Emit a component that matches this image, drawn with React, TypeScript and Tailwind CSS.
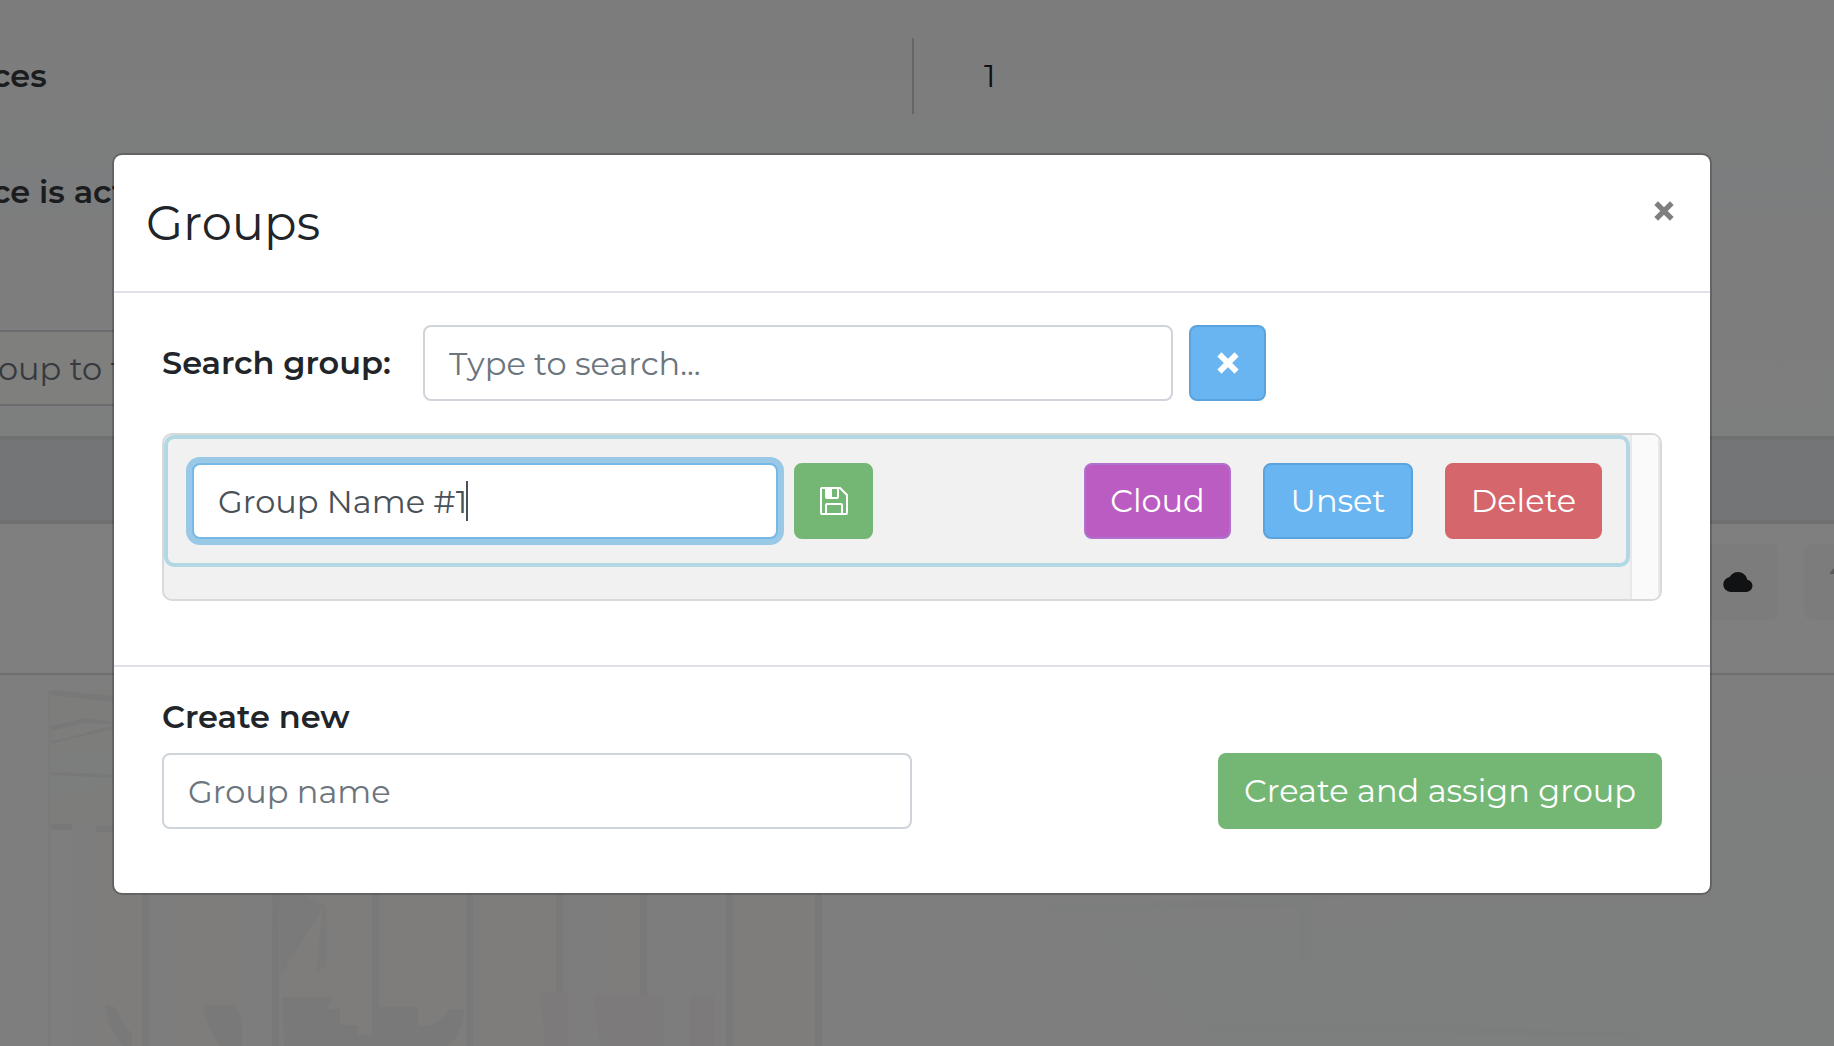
import { useState } from 'react'
import type { ButtonHTMLAttributes, InputHTMLAttributes } from 'react'
import clsx from 'clsx'

const BUTTON_COLORS = {
  green: 'bg-[#74b674] border-[#74b674]',
  purple: 'bg-[#ba5cc2] border-[#b070cc]',
  blue: 'bg-[#69b5f1] border-[#5ba3dc]',
  red: 'bg-[#d5666b] border-[#d5666b]',
}

type ButtonProps = ButtonHTMLAttributes<HTMLButtonElement> & {
  color: keyof typeof BUTTON_COLORS
}

function Button({ color, className, ...props }: ButtonProps) {
  return (
    <button
      type="button"
      className={clsx(
        'flex h-[76px] shrink-0 items-center justify-center rounded-lg border-2 text-white',
        BUTTON_COLORS[color],
        className,
      )}
      {...props}
    />
  )
}

function TextInput({ className, ...props }: InputHTMLAttributes<HTMLInputElement>) {
  return (
    <input
      type="text"
      className={clsx(
        'block h-[76px] rounded-lg border-2 bg-white px-6 text-[#495057] outline-none placeholder:text-[#6c757d]',
        className,
      )}
      {...props}
    />
  )
}

function CrossIcon({ size }: { size: number }) {
  return (
    <svg width={size} height={size} viewBox="0 0 22 22" fill="none" stroke="currentColor" strokeWidth="5.8" strokeLinejoin="round" aria-hidden>
      <path d="M2.400 2.400 19.600 19.600M19.600 2.400 2.400 19.600" />
    </svg>
  )
}

function SaveIcon() {
  return (
    <svg width="28" height="28" viewBox="0 0 28 28" fill="none" stroke="currentColor" strokeWidth="2" aria-hidden>
      <path d="M1 2a1 1 0 0 1 1-1H20L27 8V26a1 1 0 0 1-1 1H2a1 1 0 0 1-1-1Z" />
      <path d="M6 1V10a1 1 0 0 0 1 1H17a1 1 0 0 0 1-1V1" />
      <path d="M5.500 1h6.500v9.500H6Z" fill="currentColor" stroke="none" />
      <path d="M6 27V18a1 1 0 0 1 1-1H21a1 1 0 0 1 1 1V27" />
    </svg>
  )
}

function CloudIcon() {
  return (
    <svg width="30" height="20" viewBox="0 0 30 20" fill="#202428" aria-hidden>
      <path d="M7.500 20A7.500 7.500 0 0 1 6.600 5.100C8.200 2 11.300 0 15 0c4.600 0 8.300 3.200 9.300 7.700A6.200 6.200 0 0 1 23.800 20Z" />
    </svg>
  )
}

const POSTS = [142, 272, 372, 466, 556, 640, 726, 815]

// Washed-out harbour scene under the table
function Backdrop() {
  return (
    <svg className="h-[371px] w-full grow" viewBox="0 0 1834 371" preserveAspectRatio="xMinYMin slice" aria-hidden>
      <path d="M50 15H113V150H50Z" fill="#fbfaf9" />
      <path d="M50 80H113V108L50 122Z" fill="#f9fbfa" />
      <path d="M98 150H810V371H98Z" fill="#fdfaf7" />
      <path d="M73 150H98V371H73ZM149 218H178V371H149ZM243 218H270V371H243ZM570 218H600V371H570ZM650 218H724V371H650Z" fill="#fafbfb" />
      <path d="M50 15 113 21V27L50 20ZM50 51 85 43 113 47V49L85 48 50 56ZM50 67 113 51V54L50 69ZM50 97 113 99V103L50 100ZM50 149H72V155H50ZM96 151H113V157H96Z" fill="#f1f1f1" />
      <path d="M48 15H51V371H48Z" fill="#f7f7f7" />
      {POSTS.map((x) => (
        <path key={x} d={`M${x} 218h7v153h-7Z`} fill="#f3f3f3" />
      ))}
      <path d="M279 218H300L327 232V290L316 298L322 234L281 300Z" fill="#f5f4f4" />
      <path d="M105 330Q114 328 118 338Q124 352 132 358V371H122Q108 354 105 330ZM203 330H236L242 345V371H220Q206 352 203 330ZM282 322H332L328 334H340V350H358V360H374V332H418V350Q436 354 450 334H464Q462 360 448 371H284Z" fill="#f3f3f3" />
      <path d="M540 318H568V371H545ZM594 320H664V371H600ZM690 320H714V371H690Z" fill="#f8f5f5" />
      <path d="M1090 250H1400V230H1712V100H1834V371H1210Z" fill="#fbfdfc" />
      <path d="M1048 230 1210 225 1400 216V219L1310 226V290H1300V232L1050 236ZM1210 349H1420L1640 358V362L1210 356Z" fill="#f9fafb" />
    </svg>
  )
}

function DevicePage() {
  return (
    <div className="flex min-h-screen flex-col overflow-hidden bg-[#fcfcfc]">
      <section className="bg-linear-to-b from-[#f8f9fb] to-[#fbfcfd] pt-[38px] pb-[30px]">
        <div className="flex h-[76px] items-center pr-[6px]">
          <div className="flex h-full w-1/2 items-center border-r-2 border-[#ccc]">
            <span className="-ml-2 font-semibold text-[#36393c]">ces</span>
          </div>
          <span className="pl-[70px] text-[#202224]">1</span>
        </div>
        <div className="mt-10 flex h-[76px] items-center">
          <span className="-ml-2 font-semibold text-[#36393c]">ce is act</span>
        </div>
        <input
          type="text"
          aria-label="Group filter"
          placeholder="oup to f"
          className="mt-[100px] -ml-[2px] block h-[76px] w-1/2 border-y-2 border-[#d4d8dc] bg-[#fffefc] placeholder:text-[#6c757d]"
        />
      </section>
      <div className="h-[88px] border-y-4 border-[#dee0e2] bg-[#e8eaec]" />
      <div className="flex h-[151px] items-start justify-end gap-[26px] border-b-2 border-[#dcdee0] bg-[#fefefe] pt-5">
        <button type="button" aria-label="Cloud" className="flex h-[76px] w-20 items-center justify-center rounded-lg bg-[#f9f9f9]">
          <CloudIcon />
        </button>
        <button type="button" aria-label="More" className="flex h-[76px] w-[30px] items-start justify-end rounded-l-lg bg-[#f9f9f9] pt-6">
          <svg width="4" height="6" viewBox="0 0 4 6" fill="#b4b4b4" aria-hidden>
            <path d="M4 0V6H0V4.500Z" />
          </svg>
        </button>
      </div>
      <Backdrop />
    </div>
  )
}

export default function App() {
  const [search, setSearch] = useState('')
  const [name, setName] = useState('Group Name #1')
  const [newName, setNewName] = useState('')

  return (
    <div className="relative font-[Montserrat,Inter,sans-serif] text-[32px] leading-[48px] text-[#212529]">
      <DevicePage />

      <div className="absolute inset-0 bg-black/50 pt-[153px] pr-[122px] pl-28">
        <div role="dialog" aria-labelledby="groups-title" className="rounded-[10px] border-2 border-black/20 bg-white bg-clip-padding">
          {/* Header */}
          <header className="flex items-start justify-between border-b-2 border-[#dee2e6] px-8 py-8">
            <h1 id="groups-title" className="text-[48px] leading-[72px]">Groups</h1>
            <button type="button" aria-label="Close" className="mt-[14px] mr-1 text-[#7f7f7f]">
              <CrossIcon size={20} />
            </button>
          </header>

          {/* Body */}
          <div className="px-12 pt-8 pb-16">
            <div className="flex items-center gap-4">
              <label htmlFor="search" className="w-[245px] font-semibold whitespace-nowrap">Search group:</label>
              <TextInput
                id="search"
                className="w-1/2 border-[#ced4da]"
                placeholder="Type to search..."
                value={search}
                onChange={(e) => setSearch(e.target.value)}
              />
              <Button color="blue" className="w-[77px]" aria-label="Clear search" onClick={() => setSearch('')}>
                <CrossIcon size={22} />
              </Button>
            </div>

            <div className="mt-8 flex h-[168px] overflow-hidden rounded-[10px] border-2 border-[#d9d9d9] bg-[#f1f1f1]">
              <div className="flex-1">
                <div className="flex h-[132px] items-start rounded-[10px] border-4 border-[#b2d8e3] px-6 pt-6">
                  <div className="relative w-[586px]">
                    <TextInput
                      aria-label="Group name"
                      className="w-full border-[#76b9e4] ring-6 ring-[#99c9e7]"
                      value={name}
                      onChange={(e) => setName(e.target.value)}
                    />
                    <span className="absolute top-[18px] left-[274px] h-10 w-[2px] bg-[#495057]" />
                  </div>
                  <Button color="green" className="ml-4 w-[79px]" aria-label="Save">
                    <SaveIcon />
                  </Button>
                  <div className="ml-auto flex gap-8">
                    <Button color="purple" className="w-[147px]">Cloud</Button>
                    <Button color="blue" className="w-[150px]">Unset</Button>
                    <Button color="red" className="w-[157px]">Delete</Button>
                  </div>
                </div>
              </div>
              {/* Scrollbar track */}
              <div className="w-[30px] border-x-2 border-[#e8e8e8] bg-[#fafafa]" />
            </div>
          </div>

          {/* Footer */}
          <footer className="border-t-2 border-[#dee2e6] px-12 pt-[26px] pb-16">
            <label htmlFor="new-group" className="block w-fit font-semibold">Create new</label>
            <div className="mt-3 flex justify-between">
              <TextInput
                id="new-group"
                className="w-1/2 border-[#ced4da]"
                placeholder="Group name"
                value={newName}
                onChange={(e) => setNewName(e.target.value)}
              />
              <Button color="green" className="w-[444px]">Create and assign group</Button>
            </div>
          </footer>
        </div>
      </div>
    </div>
  )
}
